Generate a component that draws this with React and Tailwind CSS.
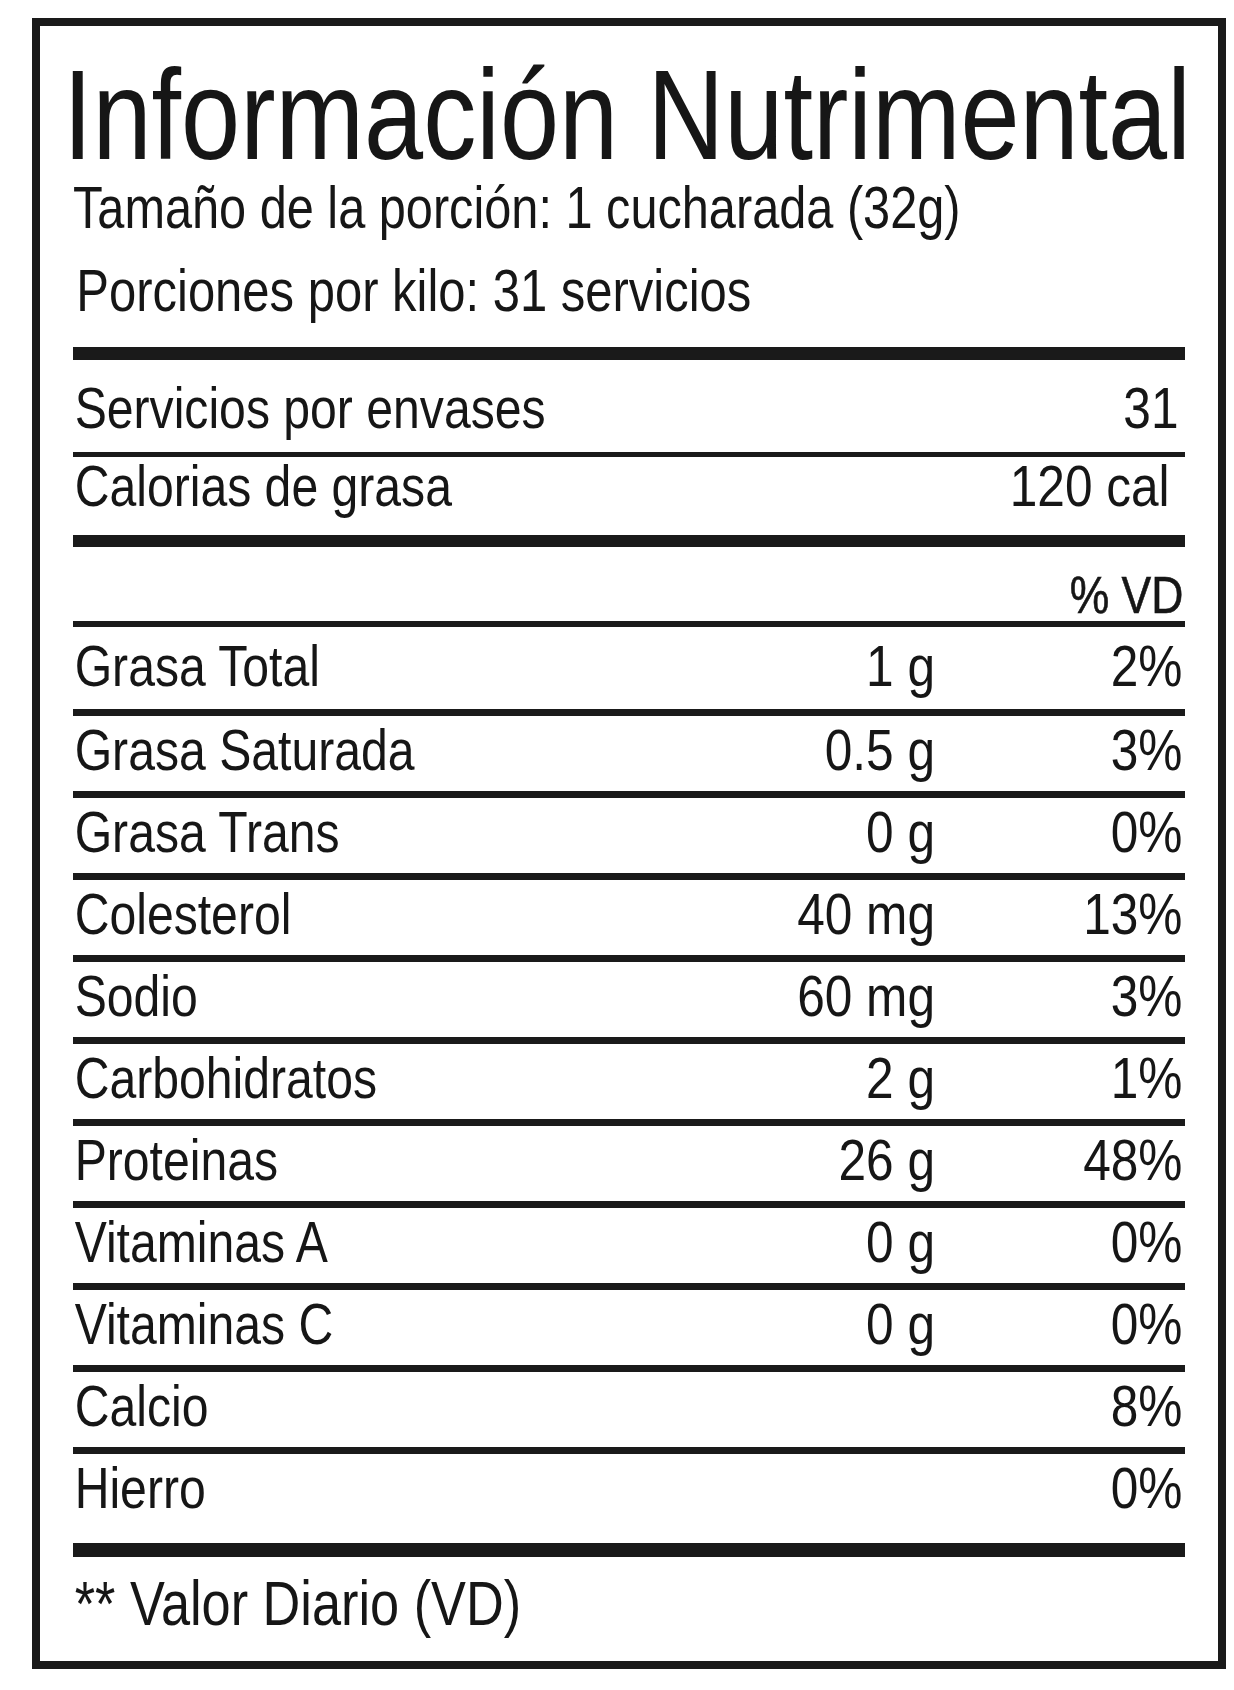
import React from "react";

const rows = [
  ["Grasa Total", "1 g", "2%"],
  ["Grasa Saturada", "0.5 g", "3%"],
  ["Grasa Trans", "0 g", "0%"],
  ["Colesterol", "40 mg", "13%"],
  ["Sodio", "60 mg", "3%"],
  ["Carbohidratos", "2 g", "1%"],
  ["Proteinas", "26 g", "48%"],
  ["Vitaminas A", "0 g", "0%"],
  ["Vitaminas C", "0 g", "0%"],
  ["Calcio", "", "8%"],
  ["Hierro", "", "0%"],
];

const L = "origin-left scale-x-[0.83] whitespace-nowrap";
const R = "origin-right scale-x-[0.855] whitespace-nowrap text-right";

function Row({ label, amount, pct, variant }) {
  const cls =
    variant === "first"
      ? "border-t-[6px] h-[88px] pt-[10px]"
      : variant === "last"
      ? "border-t-[7px] h-[96px] pt-[5px]"
      : "border-t-[7px] h-[82px] pt-[5px]";
  return (
    <div className={`flex items-start border-[#1a1a1a] text-[58px] leading-none ${cls}`}>
      <div className={`flex-1 pl-[2px] ${L}`}>{label}</div>
      <div className={`w-[200px] ${R}`}>{amount}</div>
      <div className={`w-[250px] pr-[3px] ${R}`}>{pct}</div>
    </div>
  );
}

export default function App() {
  return (
    <div className="w-[1234px] h-[1690px] bg-white pt-[18px] pl-[32px] text-[#161616] font-['Liberation_Sans','Arial',sans-serif]">
      <div className="w-[1194px] border-[8px] border-[#1a1a1a] pl-[33px] pr-[33px] pt-[25px]">
        <h1 className="text-[128px] leading-none whitespace-nowrap -ml-[10px] origin-left scale-x-[0.83]">
          Información Nutrimental
        </h1>
        <div className="text-[59px] leading-none origin-left scale-x-[0.825] whitespace-nowrap">
          Tamaño de la porción: 1 cucharada (32g)
        </div>
        <div className={`mt-[24px] pl-[4px] text-[59px] leading-none ${L}`}>
          Porciones por kilo: 31 servicios
        </div>
        <div className="mt-[26px] h-[13px] bg-[#1a1a1a]" />
        <div className="flex items-start h-[92px] pt-[19px] text-[58px] leading-none">
          <div className={`flex-1 pl-[2px] ${L}`}>Servicios por envases</div>
          <div className={`pr-[7px] ${R}`}>31</div>
        </div>
        <div className="flex items-start border-t-[5px] border-[#1a1a1a] h-[83px] text-[58px] leading-none">
          <div className={`flex-1 pl-[2px] ${L}`}>Calorias de grasa</div>
          <div className={`pr-[18px] ${R}`}>120 cal</div>
        </div>
        <div className="h-[12px] bg-[#1a1a1a]" />
        <div className="h-[74px] pt-[22px] text-[52px] leading-none">
          <div className={`pr-[2px] [-webkit-text-stroke:0.6px_#161616] ${R}`}>% VD</div>
        </div>
        {rows.map((r, i) => (
          <Row
            key={r[0]}
            label={r[0]}
            amount={r[1]}
            pct={r[2]}
            variant={i === 0 ? "first" : i === rows.length - 1 ? "last" : "mid"}
          />
        ))}
        <div className="h-[14px] bg-[#1a1a1a]" />
        <div className={`pt-[15px] pb-[26px] text-[63px] leading-none pl-[2px] ${L}`}>
          ** Valor Diario (VD)
        </div>
      </div>
    </div>
  );
}
